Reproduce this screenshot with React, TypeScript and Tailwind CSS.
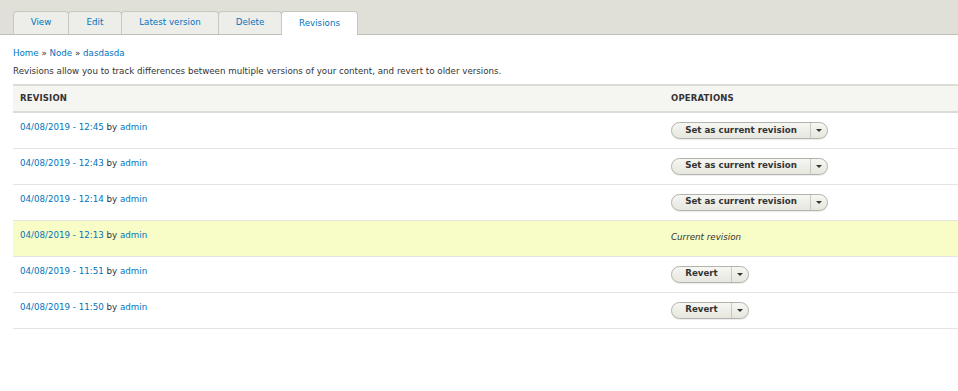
import React from "react";

const rows = [
  { date: "04/08/2019 - 12:45", op: "set" },
  { date: "04/08/2019 - 12:43", op: "set" },
  { date: "04/08/2019 - 12:14", op: "set" },
  { date: "04/08/2019 - 12:13", op: "current" },
  { date: "04/08/2019 - 11:51", op: "revert" },
  { date: "04/08/2019 - 11:50", op: "revert" },
];

const tabs = [
  { label: "View", w: "w-[56px]" },
  { label: "Edit", w: "w-[54px]" },
  { label: "Latest version", w: "w-[98px]" },
  { label: "Delete", w: "w-[64px]" },
  { label: "Revisions", w: "w-[77px]" },
];

function DropButton({ label, wide }: { label: string; wide?: boolean }) {
  return (
    <div className="inline-flex h-[17px] items-stretch whitespace-nowrap rounded-full border border-[#b3b3ad] bg-gradient-to-b from-[#f6f6f3] to-[#e7e7df] text-[8.7px] font-bold text-[#333] shadow-[0_1px_1px_rgba(0,0,0,0.08)]">
      <span className={`flex items-center justify-center ${wide ? "w-[138px]" : "w-[59px]"}`}>{label}</span>
      <span className="flex w-[17px] items-center justify-center border-l border-[#c8c8c2]">
        <span className="block h-0 w-0 border-x-[3px] border-t-[3px] border-x-transparent border-t-[#333]" />
      </span>
    </div>
  );
}

export default function App() {
  return (
    <div className="min-h-[391px] bg-white font-['DejaVu_Sans',sans-serif] text-[#333]">
      {/* Header with tabs */}
      <div className="h-[35px] border-b border-[#bfbfba] bg-[#e0e0d8] pl-[13px] pt-[11px]">
        <ul className="flex">
          {tabs.map((t) => {
            const active = t.label === "Revisions";
            return (
              <li
                key={t.label}
                className={`-ml-px first:ml-0 flex h-[23px] items-center justify-center rounded-t-[4px] border border-b-0 border-[#c8c8c2] text-[8.7px] text-[#0074bd] ${t.w} ${
                  active ? "relative z-10 h-[24px] bg-white" : "bg-[#ededea]"
                }`}
              >
                {t.label}
              </li>
            );
          })}
        </ul>
      </div>

      <div className="pl-[13px]">
        <div className="mt-[12px] text-[8.7px] leading-[12px] text-[#0074bd]">
          Home <span className="text-[#333]">»</span> Node <span className="text-[#333]">»</span> dasdasda
        </div>
        <p className="mt-[6px] text-[8.7px] leading-[12px]">
          Revisions allow you to track differences between multiple versions of your content, and revert to older versions.
        </p>

        <table className="mt-[7px] w-[calc(100%+20px)] border-collapse text-[8.7px]">
          <thead>
            <tr className="border-y-2 border-[#dcdcd6] bg-[#f5f5f2]">
              <th className="h-[27px] w-[650px] pl-[7px] text-left text-[8.5px] font-bold uppercase tracking-[0.02em]">Revision</th>
              <th className="pl-[8px] text-left text-[8.5px] font-bold uppercase tracking-[0.02em]">Operations</th>
            </tr>
          </thead>
          <tbody>
            {rows.map((r) => {
              const current = r.op === "current";
              return (
                <tr key={r.date} className={`h-[36px] border-b border-[#e6e4df] ${current ? "bg-[#f8fcc6]" : ""}`}>
                  <td className="pl-[7px] pt-[8px] align-top leading-[12px]">
                    <span className="text-[#0074bd]">{r.date}</span> by <span className="text-[#0074bd]">admin</span>
                  </td>
                  <td className="pl-[8px] align-middle">
                    {r.op === "set" && <DropButton label="Set as current revision" wide />}
                    {r.op === "revert" && <DropButton label="Revert" />}
                    {current && <em>Current revision</em>}
                  </td>
                </tr>
              );
            })}
          </tbody>
        </table>
      </div>
    </div>
  );
}
